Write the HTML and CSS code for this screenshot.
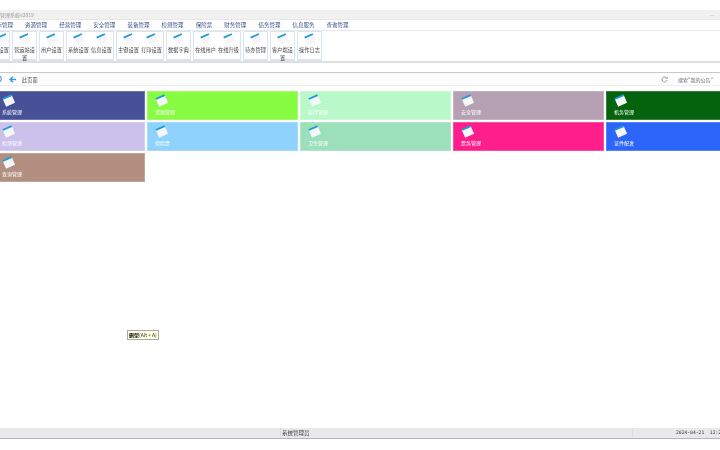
FILE: index.html
```html
<!DOCTYPE html>
<html lang="zh-CN">
<head>
<meta charset="utf-8">
<title>管理系统v2019</title>
<link rel="stylesheet" href="styles.css">
</head>
<body>
<svg class="defs" width="0" height="0" aria-hidden="true">
  <symbol id="note" viewBox="0 0 14 14">
    <g transform="rotate(-24 7 7)">
      <rect x="2" y="3" width="10.5" height="9" fill="#f4f6f9"/>
      <rect x="2" y="2" width="10.5" height="2" fill="#1e9ad8"/>
    </g>
  </symbol>
</svg>
<div class="app">
  <div class="title-bar"><span class="title">管理系统v2019</span><span class="minimize">—</span></div>
  <nav class="tabs">
    <span class="tab tab-first">库管理</span>
    <span class="tab">资源管理</span>
    <span class="tab">经营管理</span>
    <span class="tab">安全管理</span>
    <span class="tab">装备管理</span>
    <span class="tab">检测管理</span>
    <span class="tab">保险票</span>
    <span class="tab">财务管理</span>
    <span class="tab">债务管理</span>
    <span class="tab">信息服务</span>
    <span class="tab">查询管理</span>
  </nav>
  <div class="ribbon">
    <div class="group">
      <div class="tool tool-first"><svg class="tool-icon"><use href="#note"/></svg><span>设置</span></div>
    </div>
    <div class="group"><div class="tool"><svg class="tool-icon"><use href="#note"/></svg><span class="tool-label">营运站设置</span></div></div>
    <div class="group"><div class="tool"><svg class="tool-icon"><use href="#note"/></svg><span class="tool-label">用户设置</span></div></div>
    <div class="group">
      <div class="tool"><svg class="tool-icon"><use href="#note"/></svg><span class="tool-label">系统设置</span></div>
      <div class="tool"><svg class="tool-icon"><use href="#note"/></svg><span class="tool-label">信息设置</span></div>
    </div>
    <div class="group">
      <div class="tool"><svg class="tool-icon"><use href="#note"/></svg><span class="tool-label">主键设置</span></div>
      <div class="tool"><svg class="tool-icon"><use href="#note"/></svg><span class="tool-label">打印设置</span></div>
    </div>
    <div class="group"><div class="tool"><svg class="tool-icon"><use href="#note"/></svg><span class="tool-label">数据字典</span></div></div>
    <div class="group">
      <div class="tool"><svg class="tool-icon"><use href="#note"/></svg><span class="tool-label">在线用户</span></div>
      <div class="tool"><svg class="tool-icon"><use href="#note"/></svg><span class="tool-label">在线升级</span></div>
    </div>
    <div class="group"><div class="tool"><svg class="tool-icon"><use href="#note"/></svg><span class="tool-label">待办管理</span></div></div>
    <div class="group"><div class="tool"><svg class="tool-icon"><use href="#note"/></svg><span class="tool-label">客户端设置</span></div></div>
    <div class="group"><div class="tool"><svg class="tool-icon"><use href="#note"/></svg><span class="tool-label">操作日志</span></div></div>
  </div>
  <div class="spacer"></div>
  <div class="address">
    <svg class="home" viewBox="0 0 10 10"><circle cx="5" cy="5" r="4" fill="none" stroke="#4da3e6" stroke-width="1.4"/></svg>
    <svg class="back" viewBox="0 0 10 10"><path d="M5.5 1 L1.5 5 L5.5 9 M1.5 5 H10" fill="none" stroke="#2f9bf0" stroke-width="2"/></svg>
    <span class="crumb">此页面</span>
    <svg class="refresh" viewBox="0 0 10 10"><path d="M8.2 3.2 A3.6 3.6 0 1 0 8.6 5.6" fill="none" stroke="#777" stroke-width="1"/><path d="M6.6 3.4 H9 V1" fill="none" stroke="#777" stroke-width="0.8"/></svg>
    <span class="search">搜索"我的公告"</span>
  </div>
  <main class="tiles">
    <a class="tile c1"><svg class="tile-icon"><use href="#note"/></svg><span>系统管理</span></a>
    <a class="tile c2"><svg class="tile-icon"><use href="#note"/></svg><span>资源管理</span></a>
    <a class="tile c3"><svg class="tile-icon"><use href="#note"/></svg><span>运行管理</span></a>
    <a class="tile c4"><svg class="tile-icon"><use href="#note"/></svg><span>安全管理</span></a>
    <a class="tile c5"><svg class="tile-icon"><use href="#note"/></svg><span>机务管理</span></a>
    <a class="tile c6"><svg class="tile-icon"><use href="#note"/></svg><span>检测管理</span></a>
    <a class="tile c7"><svg class="tile-icon"><use href="#note"/></svg><span>保险票</span></a>
    <a class="tile c8"><svg class="tile-icon"><use href="#note"/></svg><span>卫生管理</span></a>
    <a class="tile c9"><svg class="tile-icon"><use href="#note"/></svg><span>票务管理</span></a>
    <a class="tile c10"><svg class="tile-icon"><use href="#note"/></svg><span>证件配发</span></a>
    <a class="tile c11"><svg class="tile-icon"><use href="#note"/></svg><span>查询管理</span></a>
  </main>
  <footer class="status">
    <span class="status-left"></span>
    <span class="status-user">系统管理员</span>
    <span class="status-time">2024-04-21&nbsp;&nbsp;12:2</span>
  </footer>
</div>
<div class="tooltip"><b class="tooltip-key">删型</b>(Alt + A)</div>
</body>
</html>
```
FILE: styles.css
```css
* { box-sizing: border-box; }
html, body { margin: 0; height: 100%; background: #fff; overflow: hidden; }
body { font-family: "Noto Sans CJK SC", "Liberation Sans", sans-serif; font-size: 5.5px; color: #444; position: relative; }
.defs { position: absolute; }
.app { height: 450px; display: flex; flex-direction: column; padding-top: 10px; filter: blur(0.45px); }

.title-bar { height: 10px; flex: none; background: #f1f1f1; border-bottom: 1px solid #e6e6e6; display: flex; justify-content: space-between; align-items: center; padding: 0 6px 0 0; color: #999; line-height: 9px; font-size: 5px; }
.minimize { color: #aaa; }

.tabs { height: 11px; flex: none; display: flex; align-items: center; gap: 12.1px; border-bottom: 1px solid #e8e8e8; margin-left: -3.5px; color: #3c4f86; font-size: 5.5px; line-height: 10px; }
.tab { white-space: nowrap; }

.ribbon { height: 32px; flex: none; display: flex; gap: 2px; margin-left: -15px; border-bottom: 2px solid #dfdfdf; }
.group { height: 30px; display: flex; background: #fff; border: 1px solid #d8e5f1; border-bottom-width: 2px; border-radius: 1px; }
.tool { width: 23px; display: flex; flex-direction: column; align-items: center; padding-top: 1px; text-align: center; color: #444; font-size: 5.2px; line-height: 7.5px; }
.tool-label { width: 21.5px; word-break: break-all; }
.tool-first { align-items: flex-end; }
.tool-icon { width: 12px; height: 12px; flex: none; margin-bottom: 1px; }

.spacer { height: 10px; flex: none; border-bottom: 1px solid #c9c9c9; }

.address { height: 13px; flex: none; display: flex; align-items: center; background: #fcfcfc; border-bottom: 1px solid #eee; margin-left: -6px; color: #555; font-size: 5.2px; }
.home { width: 8px; height: 8px; flex: none; }
.back { width: 7px; height: 7px; flex: none; margin-left: 7px; }
.crumb { margin-left: 6px; }
.refresh { width: 7px; height: 7px; flex: none; margin-left: auto; }
.search { width: 45px; height: 11px; flex: none; margin-left: 7px; padding-left: 3px; background: #fff; font-size: 5px; line-height: 11px; color: #666; white-space: nowrap; overflow: hidden; }

.tiles { flex: none; height: 342px; display: grid; grid-template-columns: repeat(5, 151px); grid-auto-rows: 29px; gap: 2px; align-content: start; margin-left: -6px; padding-top: 5px; }
.tile { display: flex; flex-direction: column; padding: 2px 0 0 7px; color: #fff; font-size: 5px; line-height: 8px; border: 1px solid rgba(255,255,255,.2); }
.tile-icon { width: 13px; height: 13px; flex: none; margin-bottom: 1px; }
.c1 { background: #475198; }
.c2 { background: #88fb43; }
.c3 { background: #b9f9c9; }
.c4 { background: #b6a1b4; }
.c5 { background: #05620d; }
.c6 { background: #cbc1ea; }
.c7 { background: #8fd2fd; }
.c8 { background: #9bdfbb; }
.c9 { background: #fe1e8c; }
.c10 { background: #2c65f9; }
.c11 { background: #b28f80; }

.status { height: 11px; flex: none; display: grid; grid-template-columns: 280px 353px 1fr; align-items: center; background: #e9e9e9; border-bottom: 1px solid #b3b3c2; color: #444; line-height: 10px; }
.status-user { padding-left: 1px; border-left: 1px solid #dedede; border-right: 1px solid #dedede; }
.status-time { padding-left: 43px; white-space: nowrap; overflow: hidden; font-family: "DejaVu Sans Mono", monospace; font-size: 4.7px; }

.tooltip { position: absolute; left: 127px; top: 330px; height: 9.5px; padding: 0 1px; background: #ffffe1; border: 1px solid #aaa; color: #333; font-size: 5px; line-height: 7.5px; white-space: nowrap; filter: blur(0.3px); }
.tooltip-key { color: #111; font-weight: 700; }
```
